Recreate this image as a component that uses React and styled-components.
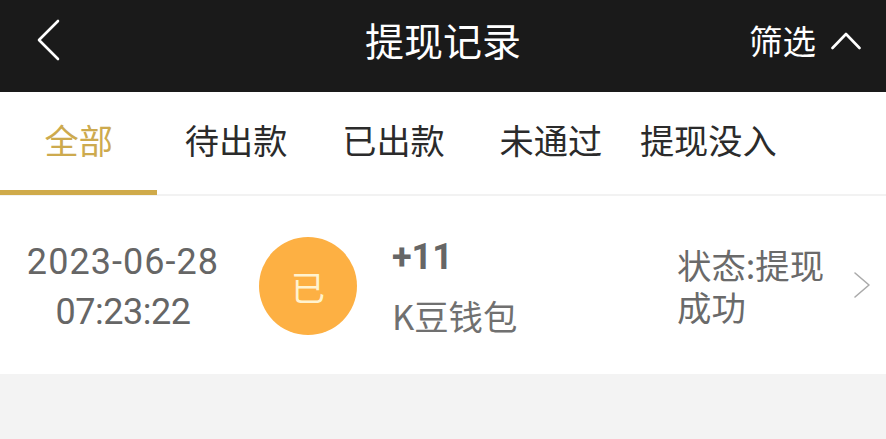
import React from 'react';
import styled, {createGlobalStyle} from "styled-components";

const GlobalStyle = createGlobalStyle`
  html, body {
    margin: 0;
    padding: 0;
    background: #f3f3f3;
  }
  body {
    font-family: "Noto Sans CJK SC", "Roboto", sans-serif;
  }
`

const tabs = ["全部", "待出款", "已出款", "未通过", "提现没入"];

const App = () => {
    return (
        <Page>
            <GlobalStyle/>
            <Header>
                <BackButton>
                    <svg width="26" height="42" viewBox="0 0 26 42" fill="none">
                        <path d="M22 2 L3 21 L22 40" stroke="#fff" strokeWidth="2.6" strokeLinecap="round" strokeLinejoin="round"/>
                    </svg>
                </BackButton>
                <Title>提现记录</Title>
                <Filter>
                    <span>筛选</span>
                    <svg width="30" height="20" viewBox="0 0 30 20" fill="none">
                        <path d="M1.5 18 L15 4 L28.5 18" stroke="#fff" strokeWidth="2.6" strokeLinecap="round" strokeLinejoin="round"/>
                    </svg>
                </Filter>
            </Header>
            <Tabs>
                {tabs.map((tab, i) => <Tab key={tab} $active={i === 0}>{tab}</Tab>)}
            </Tabs>
            <Row>
                <DateCol>
                    <DateLine $spacing="1.05px">2023-06-28</DateLine>
                    <DateLine $spacing="-0.5px">07:23:22</DateLine>
                </DateCol>
                <Badge>已</Badge>
                <Info>
                    <Amount>+11</Amount>
                    <Wallet>K豆钱包</Wallet>
                </Info>
                <Status>状态:提现成功</Status>
                <Chevron>
                    <svg width="18" height="28" viewBox="0 0 18 28" fill="none">
                        <path d="M2 2 L16 14 L2 26" stroke="#aaaaaa" strokeWidth="1.6" strokeLinecap="round" strokeLinejoin="round"/>
                    </svg>
                </Chevron>
            </Row>
            <Footer/>
        </Page>
    );
};

const Page = styled.div`
  width: 886px;
  height: 439px;
  overflow: hidden;
  background: #f3f3f3;
`

const Header = styled.div`
  height: 92px;
  background: #1a1a1a;
  color: #ffffff;
  display: flex;
  align-items: center;
  justify-content: space-between;
  position: relative;
  padding: 0 25px 12px 36px;
  box-sizing: border-box;
`

const BackButton = styled.div`
  display: flex;
  align-items: center;
`

const Title = styled.div`
  position: absolute;
  left: 0;
  right: 0;
  top: 11px;
  text-align: center;
  font-size: 39px;
  line-height: 56px;
`

const Filter = styled.div`
  display: flex;
  align-items: center;
  gap: 15px;
  font-size: 33.5px;
  line-height: 48px;
`

const Tabs = styled.div`
  height: 104px;
  background: #ffffff;
  display: grid;
  grid-template-columns: repeat(5, 157.4px);
  border-bottom: 2px solid #f2f2f2;
  box-sizing: border-box;
`

const Tab = styled.div`
  display: flex;
  justify-content: center;
  padding-top: 22px;
  height: 103px;
  box-sizing: border-box;
  font-size: 34.2px;
  line-height: 50px;
  white-space: nowrap;
  color: ${props => props.$active ? "#cdaa4e" : "#2b2b2b"};
  border-bottom: ${props => props.$active ? "5px solid #cfaa4a" : "none"};
`

const Row = styled.div`
  height: 178px;
  background: #ffffff;
  display: flex;
  align-items: center;
  color: #666666;
`

const DateCol = styled.div`
  width: 246px;
  flex-shrink: 0;
  padding-top: 4px;
  text-align: center;
  font-family: "Roboto", sans-serif;
  font-size: 36px;
  line-height: 50px;
  color: #666666;
`

const DateLine = styled.div`
  letter-spacing: ${props => props.$spacing};
`

const Badge = styled.div`
  width: 98px;
  height: 98px;
  margin: 2px 0 0 13px;
  flex-shrink: 0;
  border-radius: 50%;
  background: #fdb043;
  color: #fff3cf;
  font-size: 34px;
  display: flex;
  align-items: center;
  justify-content: center;
`

const Info = styled.div`
  margin-left: 35px;
  width: 285px;
  flex-shrink: 0;
`

const Amount = styled.div`
  margin-top: 3px;
  font-family: "Roboto", sans-serif;
  font-weight: 700;
  font-size: 36px;
  line-height: 44px;
  color: #666666;
`

const Wallet = styled.div`
  margin-top: 13px;
  font-size: 34.4px;
  line-height: 46px;
  color: #707070;
`

const Status = styled.div`
  width: 150px;
  flex-shrink: 0;
  font-size: 34.4px;
  line-height: 42px;
  color: #6a6a6a;
`

const Chevron = styled.div`
  margin-left: 26px;
  display: flex;
  align-items: center;
`

const Footer = styled.div`
  height: 65px;
  background: #f3f3f3;
`

export default App;
